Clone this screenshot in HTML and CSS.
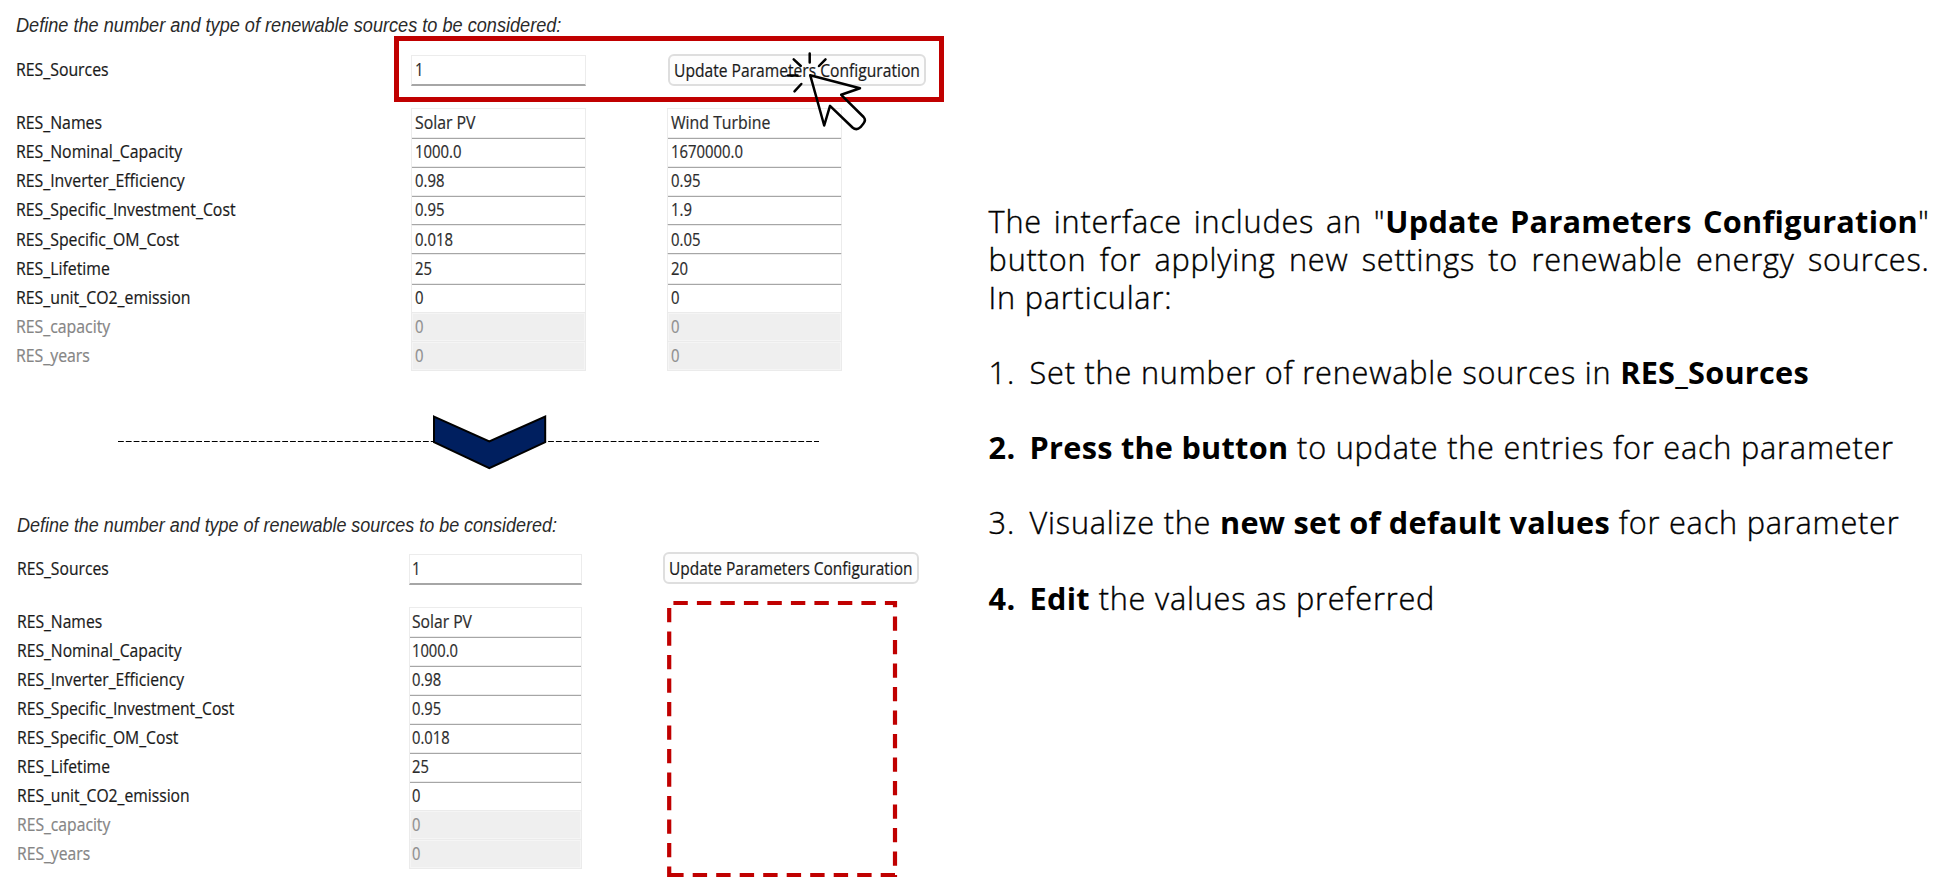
FILE: index.html
```html
<!DOCTYPE html>
<html lang="en">
<head>
<meta charset="utf-8">
<title>Update Parameters Configuration</title>
<link rel="stylesheet" href="styles.css">
</head>
<body>
<main class="slide">
  <div class="left">
    <section class="form form-before">
      <h2 class="title"><span>Define the number and type of renewable sources to be considered:</span></h2>
      <div class="row sources">
        <span class="label"><span>RES_Sources</span></span><span class="field"><span class="num">1</span></span><button class="update"><span>Update Parameters Configuration</span></button>
      </div>
      <div class="row"><span class="label"><span>RES_Names</span></span><span class="field"><span>Solar PV</span></span><span class="field"><span>Wind Turbine</span></span></div>
      <div class="row"><span class="label"><span>RES_Nominal_Capacity</span></span><span class="field"><span class="num">1000.0</span></span><span class="field"><span class="num">1670000.0</span></span></div>
      <div class="row"><span class="label"><span>RES_Inverter_Efficiency</span></span><span class="field"><span class="num">0.98</span></span><span class="field"><span class="num">0.95</span></span></div>
      <div class="row"><span class="label"><span>RES_Specific_Investment_Cost</span></span><span class="field"><span class="num">0.95</span></span><span class="field"><span class="num">1.9</span></span></div>
      <div class="row"><span class="label"><span>RES_Specific_OM_Cost</span></span><span class="field"><span class="num">0.018</span></span><span class="field"><span class="num">0.05</span></span></div>
      <div class="row"><span class="label"><span>RES_Lifetime</span></span><span class="field"><span class="num">25</span></span><span class="field"><span class="num">20</span></span></div>
      <div class="row"><span class="label"><span>RES_unit_CO2_emission</span></span><span class="field"><span class="num">0</span></span><span class="field"><span class="num">0</span></span></div>
      <div class="row off"><span class="label"><span>RES_capacity</span></span><span class="field"><span class="num">0</span></span><span class="field"><span class="num">0</span></span></div>
      <div class="row off"><span class="label"><span>RES_years</span></span><span class="field"><span class="num">0</span></span><span class="field"><span class="num">0</span></span></div>
      <div class="highlight"></div>
      <svg class="cursor" width="84" height="84" viewBox="0 0 84 84" fill="none" stroke="#000" stroke-width="2.5" stroke-linejoin="round" stroke-linecap="round">
        <path d="M20.2 25.2 L70 38.2 L51.2 44.8 L73.6 67 Q76.3 70 73.5 73.5 L70.5 77.2 Q66.5 81 62.5 77.5 L40 55.8 L34.2 75.5 Z"/>
        <path d="M19.7 3.5V12.5M3.7 9.3L10.8 16M35.5 9.3L29 16M-2 25.5H7.5M4.5 41.3L11.3 34"/>
      </svg>
    </section>

    <div class="divider">
      <svg width="940" height="58" viewBox="0 0 940 58">
        <path d="M118 29.5H819" stroke="#000" stroke-width="1" stroke-dasharray="5.8 2.02"/>
        <path d="M434 4.6L489.3 29.4L545.2 4.6V30.2L489.3 56.2L434 30.2Z" fill="#001f5f" stroke="#000" stroke-width="2"/>
      </svg>
    </div>

    <section class="form form-after">
      <h2 class="title"><span>Define the number and type of renewable sources to be considered:</span></h2>
      <div class="row sources">
        <span class="label"><span>RES_Sources</span></span><span class="field"><span class="num">1</span></span><button class="update"><span>Update Parameters Configuration</span></button>
      </div>
      <div class="row"><span class="label"><span>RES_Names</span></span><span class="field"><span>Solar PV</span></span></div>
      <div class="row"><span class="label"><span>RES_Nominal_Capacity</span></span><span class="field"><span class="num">1000.0</span></span></div>
      <div class="row"><span class="label"><span>RES_Inverter_Efficiency</span></span><span class="field"><span class="num">0.98</span></span></div>
      <div class="row"><span class="label"><span>RES_Specific_Investment_Cost</span></span><span class="field"><span class="num">0.95</span></span></div>
      <div class="row"><span class="label"><span>RES_Specific_OM_Cost</span></span><span class="field"><span class="num">0.018</span></span></div>
      <div class="row"><span class="label"><span>RES_Lifetime</span></span><span class="field"><span class="num">25</span></span></div>
      <div class="row"><span class="label"><span>RES_unit_CO2_emission</span></span><span class="field"><span class="num">0</span></span></div>
      <div class="row off"><span class="label"><span>RES_capacity</span></span><span class="field"><span class="num">0</span></span></div>
      <div class="row off"><span class="label"><span>RES_years</span></span><span class="field"><span class="num">0</span></span></div>
      <svg class="removed" width="232" height="278" viewBox="0 0 232 278">
        <path d="M2.2 275H228V3H2.2Z" fill="none" stroke="#c00000" stroke-width="4.2" stroke-dasharray="14.4 9.1"/>
      </svg>
    </section>
  </div>

  <article class="text">
    <p class="intro">The interface includes an "<b>Update Parameters Configuration</b>" button for applying new settings to renewable energy sources. <span class="lead">In particular:</span></p>
    <div class="steps">
      <div class="step"><span class="n">1.</span><span>Set the number of renewable sources in <b>RES_Sources</b></span></div>
      <div class="step"><b class="n">2.</b><span><b>Press the button</b> to update the entries for each parameter</span></div>
      <div class="step"><span class="n">3.</span><span>Visualize the <b>new set of default values</b> for each parameter</span></div>
      <div class="step"><b class="n">4.</b><span><b>Edit</b> the values as preferred</span></div>
    </div>
  </article>
</main>
</body>
</html>
```
FILE: styles.css
```css
* { box-sizing: border-box; }
body { margin: 0; background: #fff; color: #000; }
.slide { display: flex; width: 1955px; height: 891px; overflow: hidden; }
.left { width: 988.6px; flex: none; }

.form {
  --row: 29.17px; --x: 15.6px; --label: 395.6px; --w: 174.4px; --gap: 81.8px; --k: 1;
  position: relative;
  padding-left: var(--x);
  font: 400 17.5px/29.8px "Open Sans", "Noto Sans", sans-serif;
  color: #1a1a1a;
}
.form-before { height: 412px; padding-top: 14px; }
.form-after {
  --row: 28.98px; --x: 17px; --label: 391.7px; --w: 173.4px; --gap: 81px; --k: .99;
  padding-top: 43.8px;
}
.title {
  margin: 0 0 19px;
  font: italic 400 19.5px/22px "Liberation Sans", Arial, sans-serif;
  color: #2a2a2a;
}
.title span { display: inline-block; white-space: nowrap; transform-origin: 0 50%; transform: scaleX(calc(.93 * var(--k))); }
.row { display: grid; grid-template-columns: var(--label) var(--w) var(--w); height: var(--row); }
.row .field + .field { margin-left: var(--gap); margin-right: calc(0px - var(--gap)); }
.row.sources { margin-bottom: 23.8px; }
.label span, .field span, .update span {
  display: inline-block; white-space: nowrap; transform-origin: 0 50%; transform: scaleX(calc(.905 * var(--k)));
  -webkit-text-stroke: .2px currentColor;
}
.field {
  height: 100%;
  padding-left: 2.8px;
  border: 1px solid #ececec;
  border-bottom: 2px solid #a6a6a6;
  line-height: 27.8px;
  color: #2c2c2c;
}
.field .num { transform: scaleX(calc(.85 * var(--k))); }
.off { color: #858585; }
.off .field { color: #8f8f8f; background: #efefef; border: 1px solid #ebebeb; box-shadow: inset 0 0 0 1px #f5f5f5; }
.update {
  justify-self: start;
  width: 257.4px; height: 32px;
  margin: -1px 0 0 82.8px;
  padding: 0 0 0 3.8px;
  text-align: left;
  font: inherit; line-height: 28px; color: #1a1a1a;
  background: #fdfdfd;
  border: 2px solid #dedede;
  border-radius: 6px;
}
.update span { transform: scaleX(calc(.893 * var(--k))); }
.form-after .update { width: 255.6px; margin: -2px 0 0 81.4px; padding-left: 4px; }
.form-after .title { margin-bottom: 18.6px; }

.highlight { position: absolute; left: 394px; top: 36px; width: 550px; height: 66px; border: 5px solid #c00000; }
.cursor { position: absolute; left: 790px; top: 50px; overflow: visible; }
.removed { position: absolute; left: 667px; top: 130px; overflow: visible; }

.divider { height: 58px; }
.divider svg { display: block; }

.text {
  width: 941px;
  padding-top: 203.4px;
  font: 300 30.67px/37.8px "Open Sans", "Noto Sans", sans-serif;
  letter-spacing: .8px;
  -webkit-text-stroke: .4px #000;
}
.text b { font-weight: 700; letter-spacing: .26px; -webkit-text-stroke: 0; }
.intro { margin: 0; text-align: justify; }
.lead { white-space: nowrap; }
.steps { display: flex; flex-direction: column; gap: 37.4px; margin-top: 37.2px; }
.step { display: flex; white-space: nowrap; }
.step .n { flex: none; width: 41px; }
```
